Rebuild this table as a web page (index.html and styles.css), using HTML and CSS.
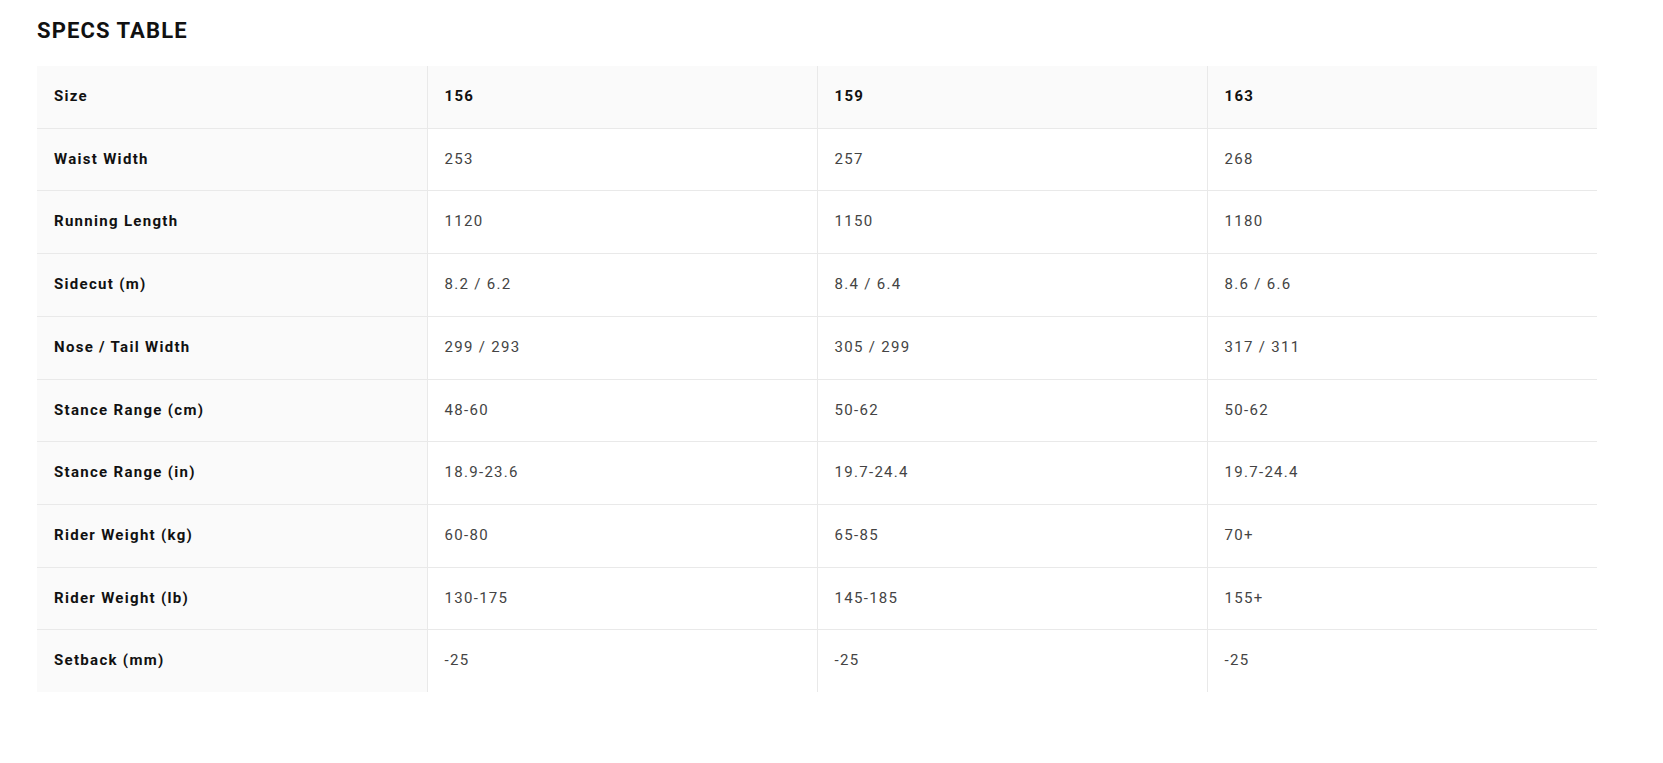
FILE: index.html
```html
<!DOCTYPE html>
<html lang="en">
<head>
<meta charset="utf-8">
<title>Specs Table</title>
<link rel="stylesheet" href="styles.css">
</head>
<body>
<section class="specs">
  <h2 class="specs-title">SPECS TABLE</h2>
  <table class="specs-table">
    <colgroup><col class="c"><col class="c"><col class="c"><col class="c"></colgroup>
    <thead>
      <tr><th class="label">Size</th><th>156</th><th>159</th><th>163</th></tr>
    </thead>
    <tbody>
      <tr><th class="label">Waist Width</th><td>253</td><td>257</td><td>268</td></tr>
      <tr><th class="label">Running Length</th><td>1120</td><td>1150</td><td>1180</td></tr>
      <tr><th class="label">Sidecut (m)</th><td>8.2 / 6.2</td><td>8.4 / 6.4</td><td>8.6 / 6.6</td></tr>
      <tr><th class="label">Nose / Tail Width</th><td>299 / 293</td><td>305 / 299</td><td>317 / 311</td></tr>
      <tr><th class="label">Stance Range (cm)</th><td>48-60</td><td>50-62</td><td>50-62</td></tr>
      <tr><th class="label">Stance Range (in)</th><td>18.9-23.6</td><td>19.7-24.4</td><td>19.7-24.4</td></tr>
      <tr><th class="label">Rider Weight (kg)</th><td>60-80</td><td>65-85</td><td>70+</td></tr>
      <tr><th class="label">Rider Weight (lb)</th><td>130-175</td><td>145-185</td><td>155+</td></tr>
      <tr><th class="label">Setback (mm)</th><td>-25</td><td>-25</td><td>-25</td></tr>
    </tbody>
  </table>
</section>
</body>
</html>
```
FILE: styles.css
```css
html, body {
  margin: 0;
  padding: 0;
  background: #ffffff;
}
body {
  font-family: Roboto, "Liberation Sans", sans-serif;
  color: #111;
}
.specs {
  padding: 17px 0 0 37px;
  width: 1560px;
}
.specs-title {
  margin: 0 0 21px 0;
  font-size: 22px;
  line-height: 28px;
  font-weight: 700;
  letter-spacing: 1.1px;
  color: #111;
}
.specs-table {
  width: 1560px;
  border-collapse: collapse;
  table-layout: fixed;
}
.specs-table th,
.specs-table td {
  text-align: left;
  padding: 20px 16px 20px 17px;
  font-size: 15px;
  line-height: 21.7px;
  letter-spacing: 1.3px;
  border-bottom: 1px solid #e9e9e9;
  border-left: 1px solid #e9e9e9;
}
.specs-table tr > :first-child {
  border-left: none;
}
.specs-table tbody tr:last-child > * {
  border-bottom: none;
}
.specs-table th {
  font-weight: 700;
  color: #111;
}
.specs-table td {
  font-weight: 400;
  color: #444;
}
.specs-table thead tr {
  background: #fafafa;
}
.specs-table .label {
  background: #fafafa;
}
```
